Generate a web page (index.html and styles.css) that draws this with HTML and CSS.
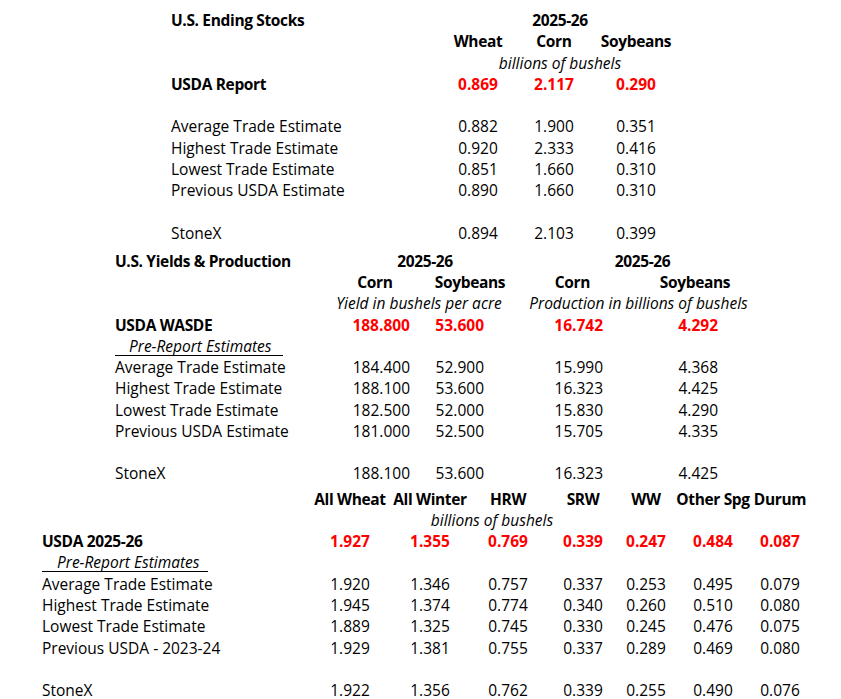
FILE: index.html
```html
<!DOCTYPE html>
<html lang="en">
<head>
<meta charset="utf-8">
<title>USDA Report vs Trade Estimates</title>
<link rel="stylesheet" href="styles.css">
</head>
<body>
<div class="sheet">
  <section class="tbl t1">
    <div class="lbl b">U.S. Ending Stocks</div>
    <div class="span3 c b">2025-26</div>

    <div class="lbl"></div>
    <div class="c b">Wheat</div>
    <div class="c b">Corn</div>
    <div class="c b">Soybeans</div>

    <div class="lbl"></div>
    <div class="span3 c i">billions of bushels</div>

    <div class="lbl b">USDA Report</div>
    <div class="c b red">0.869</div>
    <div class="c b red">2.117</div>
    <div class="c b red">0.290</div>

    <div class="blank"></div>

    <div class="lbl">Average Trade Estimate</div>
    <div class="c">0.882</div><div class="c">1.900</div><div class="c">0.351</div>
    <div class="lbl">Highest Trade Estimate</div>
    <div class="c">0.920</div><div class="c">2.333</div><div class="c">0.416</div>
    <div class="lbl">Lowest Trade Estimate</div>
    <div class="c">0.851</div><div class="c">1.660</div><div class="c">0.310</div>
    <div class="lbl">Previous USDA Estimate</div>
    <div class="c">0.890</div><div class="c">1.660</div><div class="c">0.310</div>

    <div class="blank"></div>

    <div class="lbl">StoneX</div>
    <div class="c">0.894</div><div class="c">2.103</div><div class="c">0.399</div>
  </section>

  <section class="tbl t2">
    <div class="lbl b">U.S. Yields &amp; Production</div>
    <div class="span2 c b">2025-26</div>
    <div class="span2 c b">2025-26</div>

    <div class="lbl"></div>
    <div class="c b">Corn</div>
    <div class="c b">Soybeans</div>
    <div class="c b">Corn</div>
    <div class="c b">Soybeans</div>

    <div class="lbl"></div>
    <div class="span2 c i unit-a">Yield in bushels per acre</div>
    <div class="span2 c i unit-b">Production in billions of bushels</div>

    <div class="lbl b">USDA WASDE</div>
    <div class="v1 b red">188.800</div>
    <div class="v2 b red">53.600</div>
    <div class="v3 b red">16.742</div>
    <div class="v4 b red">4.292</div>

    <div class="lbl full"><span class="pre i">Pre-Report Estimates</span></div>

    <div class="lbl">Average Trade Estimate</div>
    <div class="v1">184.400</div><div class="v2">52.900</div><div class="v3">15.990</div><div class="v4">4.368</div>
    <div class="lbl">Highest Trade Estimate</div>
    <div class="v1">188.100</div><div class="v2">53.600</div><div class="v3">16.323</div><div class="v4">4.425</div>
    <div class="lbl">Lowest Trade Estimate</div>
    <div class="v1">182.500</div><div class="v2">52.000</div><div class="v3">15.830</div><div class="v4">4.290</div>
    <div class="lbl">Previous USDA Estimate</div>
    <div class="v1">181.000</div><div class="v2">52.500</div><div class="v3">15.705</div><div class="v4">4.335</div>

    <div class="blank"></div>

    <div class="lbl">StoneX</div>
    <div class="v1">188.100</div><div class="v2">53.600</div><div class="v3">16.323</div><div class="v4">4.425</div>
  </section>

  <section class="tbl t3">
    <div class="lbl"></div>
    <div class="c b">All Wheat</div>
    <div class="c b">All Winter</div>
    <div class="c b">HRW</div>
    <div class="c b">SRW</div>
    <div class="c b">WW</div>
    <div class="c b">Other Spg</div>
    <div class="c b">Durum</div>

    <div class="lbl"></div>
    <div class="lbl"></div>
    <div class="span3 c i unit-c">billions of bushels</div>
    <div class="span3"></div>

    <div class="lbl b">USDA 2025-26</div>
    <div class="c b red">1.927</div><div class="c b red">1.355</div><div class="c b red">0.769</div><div class="c b red">0.339</div><div class="c b red">0.247</div><div class="c b red">0.484</div><div class="c b red">0.087</div>

    <div class="lbl full"><span class="pre i">Pre-Report Estimates</span></div>

    <div class="lbl">Average Trade Estimate</div>
    <div class="c">1.920</div><div class="c">1.346</div><div class="c">0.757</div><div class="c">0.337</div><div class="c">0.253</div><div class="c">0.495</div><div class="c">0.079</div>
    <div class="lbl">Highest Trade Estimate</div>
    <div class="c">1.945</div><div class="c">1.374</div><div class="c">0.774</div><div class="c">0.340</div><div class="c">0.260</div><div class="c">0.510</div><div class="c">0.080</div>
    <div class="lbl">Lowest Trade Estimate</div>
    <div class="c">1.889</div><div class="c">1.325</div><div class="c">0.745</div><div class="c">0.330</div><div class="c">0.245</div><div class="c">0.476</div><div class="c">0.075</div>
    <div class="lbl">Previous USDA - 2023-24</div>
    <div class="c">1.929</div><div class="c">1.381</div><div class="c">0.755</div><div class="c">0.337</div><div class="c">0.289</div><div class="c">0.469</div><div class="c">0.080</div>

    <div class="blank"></div>

    <div class="lbl">StoneX</div>
    <div class="c">1.922</div><div class="c">1.356</div><div class="c">0.762</div><div class="c">0.339</div><div class="c">0.255</div><div class="c">0.490</div><div class="c">0.076</div>
  </section>
</div>
</body>
</html>
```

FILE: styles.css
```css
html, body {
  margin: 0;
  padding: 0;
  background: #ffffff;
}

body {
  font-family: "Open Sans", "Lato", sans-serif;
  font-size: 15.5px;
  color: #000000;
}

.sheet {
  width: 841px;
  height: 699px;
  overflow: hidden;
  padding-top: 10px;
  box-sizing: border-box;
}

.tbl {
  display: grid;
  grid-auto-rows: 21.25px;
  align-items: center;
  line-height: 21.25px;
  white-space: nowrap;
}

.tbl > div {
  min-width: 0;
  height: 21.25px;
}

.t1 {
  margin-left: 171px;
  grid-template-columns: 269px 76px 76px 88px;
}

.t2 {
  margin-top: 7px;
  margin-left: 115px;
  grid-template-columns: 215px 90px 100px 105px 140px;
}

.t3 {
  margin-top: 4px;
  margin-left: 42px;
  grid-template-columns: 268px 80px 80px 76px 74px 52px 82px 52px;
  grid-auto-rows: 21.3px;
  line-height: 21.3px;
}

.t3 > div { height: 21.3px; }

.lbl { text-align: left; }
.c { text-align: center; display: flex; justify-content: center; }
.b { font-weight: 700; letter-spacing: -0.35px; }
.b.red { letter-spacing: 0; }
.i { font-style: italic; }
.red { color: #ff0000; }

.span2 { grid-column: span 2; }
.span3 { grid-column: span 3; }
.blank { grid-column: 1 / -1; }
.full { grid-column: 1 / -1; }

.v1, .v2, .v3, .v4 { text-align: right; }
.v1 { padding-right: 10px; }
.v2 { padding-right: 36px; }
.v3 { padding-right: 22px; }
.v4 { padding-right: 47px; }

.unit-a { padding-right: 12px; }
.unit-b { padding-right: 8px; }
.unit-c { padding-right: 26px; }

.pre {
  display: inline-block;
  line-height: 17px;
  padding-left: 14px;
  padding-right: 12px;
  border-bottom: 1px solid #000000;
}

.t3 .pre {
  padding-left: 15px;
  padding-right: 9px;
}
```
